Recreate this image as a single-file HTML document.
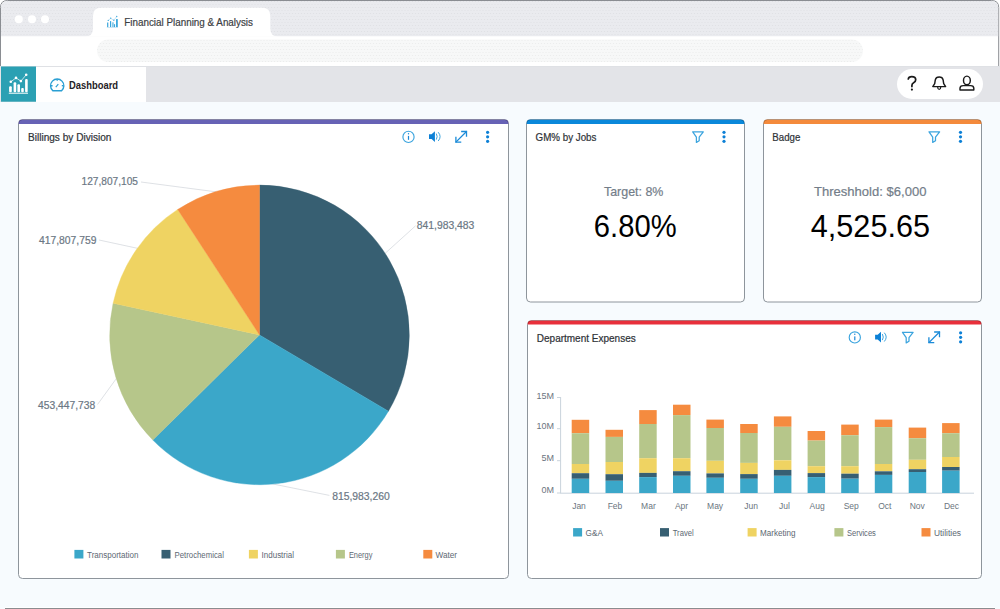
<!DOCTYPE html>
<html><head><meta charset="utf-8">
<style>
*{margin:0;padding:0}
html,body{width:1000px;height:609px;overflow:hidden;background:#f7fbfe}
svg{display:block;font-family:"Liberation Sans",sans-serif}
</style></head>
<body>
<svg width="1000" height="609" viewBox="0 0 1000 609">
<defs>
  <pattern id="dots" width="3" height="6" patternUnits="userSpaceOnUse">
    <rect width="3" height="6" fill="#eaebef"/>
    <circle cx="1.5" cy="1.5" r="0.55" fill="#dfe0e4"/>
    <circle cx="0" cy="4.5" r="0.55" fill="#dfe0e4"/>
    <circle cx="3" cy="4.5" r="0.55" fill="#dfe0e4"/>
  </pattern>
  <pattern id="dots2" width="3" height="6" patternUnits="userSpaceOnUse">
    <rect width="3" height="6" fill="#f7f8f8"/>
    <circle cx="1.5" cy="1.5" r="0.55" fill="#eaebec"/>
    <circle cx="0" cy="4.5" r="0.55" fill="#eaebec"/>
    <circle cx="3" cy="4.5" r="0.55" fill="#eaebec"/>
  </pattern>
</defs>
<!-- page bg -->
<rect x="0" y="0" width="1000" height="609" fill="#f7fbfe"/>
<!-- browser chrome -->
<rect x="0" y="0" width="1000" height="67" fill="#ffffff"/>
<path d="M0.5,67 L0.5,7.5 Q0.5,0.5 7.5,0.5 L991.5,0.5 Q998.7,0.5 998.7,7.5 L998.7,67" fill="#ffffff" stroke="#8a8d92" stroke-width="1"/>
<path d="M1,36.3 L1,7.5 Q1,1 7.5,1 L991.5,1 Q998.2,1 998.2,7.5 L998.2,36.3 Z" fill="url(#dots)"/>
<!-- tab with flares -->
<path d="M85,36.5 Q93,36.5 93,28.5 L93,16 Q93,7.8 101.2,7.8 L262.1,7.8 Q270.3,7.8 270.3,16 L270.3,28.5 Q270.3,36.5 278.3,36.5 Z" fill="#ffffff"/>
<circle cx="18.8" cy="19.2" r="4" fill="#fff"/>
<circle cx="32" cy="19.2" r="4" fill="#fff"/>
<circle cx="45" cy="19.2" r="4" fill="#fff"/>
<!-- tab icon -->
<g fill="#3aa7dc">
  <rect x="107.1" y="22.5" width="1.2" height="4.5"/>
  <rect x="110" y="21.1" width="1.2" height="5.9"/>
  <rect x="112.4" y="22.3" width="1.1" height="4.7"/>
  <rect x="114" y="24.2" width="1.1" height="2.8"/>
  <rect x="116" y="19.1" width="1.8" height="7.9"/>
  <rect x="106.8" y="27" width="11.2" height="0.6" fill="#a9d6ef"/>
  <circle cx="108.3" cy="20.4" r="0.7"/>
  <circle cx="110.7" cy="18.3" r="0.7"/>
  <circle cx="113.8" cy="20.3" r="0.7"/>
  <circle cx="116.7" cy="16.5" r="0.7"/>
  <polyline points="108.3,20.4 110.7,18.3 113.8,20.3 116.7,16.5" fill="none" stroke="#8ccbea" stroke-width="0.5"/>
</g>
<text x="124.3" y="26" font-size="11" fill="#3b3e43" stroke="#3b3e43" stroke-width="0.2" textLength="128.7" lengthAdjust="spacingAndGlyphs">Financial Planning &amp; Analysis</text>
<!-- address pill -->
<rect x="97" y="39.5" width="766" height="22.5" rx="11.25" fill="url(#dots2)"/>
<line x1="0" y1="66.5" x2="1000" y2="66.5" stroke="#dfe1e5" stroke-width="1"/>

<!-- app header -->
<rect x="0" y="67" width="1000" height="35" fill="#e3e4e8"/>
<rect x="1" y="66.5" width="35" height="35.2" fill="#2ba0b3"/>
<rect x="36" y="67" width="110" height="35" fill="#ffffff"/>
<!-- logo -->
<g fill="#ffffff">
  <rect x="9.1" y="86.3" width="2.7" height="5.9" rx="1"/>
  <rect x="13.6" y="82.3" width="2.6" height="9.9" rx="1"/>
  <rect x="17.4" y="84.3" width="2.6" height="7.9" rx="1"/>
  <rect x="21.2" y="88.1" width="2.6" height="4.1" rx="1"/>
  <rect x="25.1" y="79" width="2.6" height="13.2" rx="1"/>
  <rect x="8.8" y="92.7" width="19.2" height="1" />
  <circle cx="10.8" cy="81.8" r="1.3"/>
  <circle cx="16" cy="77.9" r="1.3"/>
  <circle cx="20.9" cy="81.1" r="1.3"/>
  <circle cx="26.2" cy="74.8" r="1.3"/>
  <polyline points="10.8,81.8 16,77.9 20.9,81.1 26.2,74.8" fill="none" stroke="#fff" stroke-width="0.7"/>
</g>
<!-- gauge icon -->
<g fill="none" stroke="#2a9fd3" stroke-width="1.4">
  <path d="M52.8,90.7 A6.65,6.65 0 1 1 61.6,90.7 Z"/>
  <line x1="57.2" y1="79.2" x2="57.2" y2="80.8"/>
  <line x1="51" y1="85.7" x2="52.6" y2="85.7"/>
  <line x1="61.8" y1="85.7" x2="63.4" y2="85.7"/>
  <line x1="55.8" y1="87.2" x2="58.3" y2="84.1" stroke-width="1.2"/>
</g>
<text x="69.1" y="88.9" font-size="10.5" font-weight="bold" fill="#1f2226" textLength="49" lengthAdjust="spacingAndGlyphs">Dashboard</text>
<!-- right pill -->
<rect x="897" y="69" width="86" height="30" rx="15" fill="#ffffff"/>
<g fill="none" stroke="#1a1a1a" stroke-width="1.45" stroke-linecap="round" stroke-linejoin="round">
  <path stroke-width="1.75" d="M908.3,79 Q908.6,76.6 911.8,76.6 Q915.7,76.6 915.7,79.7 Q915.7,81.6 913.6,82.7 Q911.9,83.6 911.9,85.4 L911.9,86.6"/>
  <path d="M932.8,86.6 L934.7,83.6 L935.3,79.8 Q935.9,76.9 939.2,76.9 Q942.5,76.9 943.1,79.8 L943.7,83.6 L945.6,86.6 Z"/>
  <path d="M937.7,87.2 Q937.7,89.3 939.2,89.3 Q940.7,89.3 940.7,87.2" stroke-width="1.2"/>
  <ellipse cx="966.9" cy="80.4" rx="3.4" ry="4.3"/>
  <path d="M960,90 L960,88.3 Q960,85.6 963.2,85.6 L970.6,85.6 Q973.8,85.6 973.8,88.3 L973.8,90 Z"/>
</g>
<circle cx="911.9" cy="89.6" r="1.1" fill="#1a1a1a"/>
<!-- cards -->
<g fill="#ffffff">
  <rect x="18.5" y="119.5" width="490" height="459" rx="4"/>
  <rect x="526.5" y="119.5" width="218" height="182.5" rx="4"/>
  <rect x="763.5" y="119.5" width="218" height="182.5" rx="4"/>
  <rect x="527.5" y="320.5" width="454" height="258" rx="4"/>
</g>
<path d="M18.5,124 L18.5,123.5 Q18.5,119.5 22.5,119.5 L504.5,119.5 Q508.5,119.5 508.5,123.5 L508.5,124 Z" fill="#6762b5"/>
<path d="M526.5,124 L526.5,123.5 Q526.5,119.5 530.5,119.5 L740.5,119.5 Q744.5,119.5 744.5,123.5 L744.5,124 Z" fill="#0a88da"/>
<path d="M763.5,124 L763.5,123.5 Q763.5,119.5 767.5,119.5 L977.5,119.5 Q981.5,119.5 981.5,123.5 L981.5,124 Z" fill="#f48a3c"/>
<path d="M527.5,324.5 L527.5,324.5 Q527.5,320.5 531.5,320.5 L977.5,320.5 Q981.5,320.5 981.5,324.5 L981.5,324.5 Z" fill="#e8303b"/>
<g stroke="#8e959c" stroke-width="1" fill="none">
  <path d="M18.5,124 L18.5,574.5 Q18.5,578.5 22.5,578.5 L504.5,578.5 Q508.5,578.5 508.5,574.5 L508.5,124"/>
  <path d="M526.5,124 L526.5,298 Q526.5,302 530.5,302 L740.5,302 Q744.5,302 744.5,298 L744.5,124"/>
  <path d="M763.5,124 L763.5,298 Q763.5,302 767.5,302 L977.5,302 Q981.5,302 981.5,298 L981.5,124"/>
  <path d="M527.5,324.5 L527.5,574.5 Q527.5,578.5 531.5,578.5 L977.5,578.5 Q981.5,578.5 981.5,574.5 L981.5,324.5"/>
</g>
<g stroke="#000" stroke-opacity="0.25" stroke-width="1" fill="none">
  <path d="M18.5,124 L18.5,123.5 Q18.5,119.5 22.5,119.5 L504.5,119.5 Q508.5,119.5 508.5,123.5 L508.5,124"/>
  <path d="M526.5,124 L526.5,123.5 Q526.5,119.5 530.5,119.5 L740.5,119.5 Q744.5,119.5 744.5,123.5 L744.5,124"/>
  <path d="M763.5,124 L763.5,123.5 Q763.5,119.5 767.5,119.5 L977.5,119.5 Q981.5,119.5 981.5,123.5 L981.5,124"/>
  <path d="M527.5,324.5 L527.5,324.5 Q527.5,320.5 531.5,320.5 L977.5,320.5 Q981.5,320.5 981.5,324.5"/>
</g>
<rect x="5" y="607" width="990" height="1" fill="#ffffff"/>
<rect x="5" y="608" width="990" height="1" fill="#8a8c90"/>

<!-- titles -->
<g font-size="10.5" fill="#2f3338" stroke="#2f3338" stroke-width="0.22">
  <text x="28" y="141" textLength="83.4" lengthAdjust="spacingAndGlyphs">Billings by Division</text>
  <text x="535.6" y="141.2" textLength="60.8" lengthAdjust="spacingAndGlyphs">GM% by Jobs</text>
  <text x="772.3" y="141.2" textLength="28" lengthAdjust="spacingAndGlyphs">Badge</text>
  <text x="536.8" y="341.7" textLength="98.9" lengthAdjust="spacingAndGlyphs">Department Expenses</text>
</g>

<!-- KPI -->
<text x="604" y="196" font-size="13" fill="#737d89" stroke="#737d89" stroke-width="0.2" textLength="59.4" lengthAdjust="spacingAndGlyphs">Target: 8%</text>
<text x="593.8" y="236.5" font-size="32" fill="#000000" textLength="82.8" lengthAdjust="spacingAndGlyphs">6.80%</text>
<text x="814" y="196" font-size="13" fill="#737d89" stroke="#737d89" stroke-width="0.2" textLength="112.4" lengthAdjust="spacingAndGlyphs">Threshhold: $6,000</text>
<text x="810.8" y="236.5" font-size="32" fill="#000000" textLength="119.2" lengthAdjust="spacingAndGlyphs">4,525.65</text>

<!-- pie leader lines -->
<g stroke="#d5d9de" stroke-width="0.8" fill="none">
  <line x1="141" y1="182" x2="225" y2="193"/>
  <line x1="99" y1="240" x2="150" y2="251"/>
  <line x1="97.5" y1="404.5" x2="125" y2="366.6"/>
  <line x1="415.6" y1="225.8" x2="380" y2="258"/>
  <line x1="329.4" y1="495.4" x2="262" y2="481.8"/>
</g>
<!-- pie -->
<path d="M259.5,334.9 L259.50,185.10 A149.8,149.8 0 0 1 388.44,411.15 Z" fill="#375f72" stroke="#375f72" stroke-width="0.4" stroke-linejoin="round"/>
<path d="M259.5,334.9 L388.44,411.15 A149.8,149.8 0 0 1 152.84,440.08 Z" fill="#3ba7c9" stroke="#3ba7c9" stroke-width="0.4" stroke-linejoin="round"/>
<path d="M259.5,334.9 L152.84,440.08 A149.8,149.8 0 0 1 113.08,303.24 Z" fill="#b6c68a" stroke="#b6c68a" stroke-width="0.4" stroke-linejoin="round"/>
<path d="M259.5,334.9 L113.08,303.24 A149.8,149.8 0 0 1 177.69,209.41 Z" fill="#efd362" stroke="#efd362" stroke-width="0.4" stroke-linejoin="round"/>
<path d="M259.5,334.9 L177.69,209.41 A149.8,149.8 0 0 1 259.50,185.10 Z" fill="#f58b3f" stroke="#f58b3f" stroke-width="0.4" stroke-linejoin="round"/>
<!-- pie labels -->
<g font-size="10.4" fill="#6b7784" stroke="#6b7784" stroke-width="0.2">
  <text x="81.6" y="185.4" textLength="56.4" lengthAdjust="spacingAndGlyphs">127,807,105</text>
  <text x="39" y="244" textLength="57.4" lengthAdjust="spacingAndGlyphs">417,807,759</text>
  <text x="38" y="408.5" textLength="57.2" lengthAdjust="spacingAndGlyphs">453,447,738</text>
  <text x="416.8" y="228.6" textLength="57.6" lengthAdjust="spacingAndGlyphs">841,983,483</text>
  <text x="332.2" y="499.6" textLength="57.6" lengthAdjust="spacingAndGlyphs">815,983,260</text>
</g>
<!-- pie legend -->
<g>
  <rect x="74.4" y="549.9" width="9" height="8.6" fill="#3ba7c9"/>
  <rect x="161.5" y="549.9" width="9" height="8.6" fill="#375f72"/>
  <rect x="248.9" y="549.9" width="9" height="8.6" fill="#efd362"/>
  <rect x="335.9" y="549.9" width="9" height="8.6" fill="#b6c68a"/>
  <rect x="423.3" y="549.9" width="9" height="8.6" fill="#f58b3f"/>
</g>
<g font-size="8.5" fill="#5d6873">
  <text x="87.1" y="557.8" textLength="51.4" lengthAdjust="spacingAndGlyphs">Transportation</text>
  <text x="174.5" y="557.8" textLength="49.4" lengthAdjust="spacingAndGlyphs">Petrochemical</text>
  <text x="261.6" y="557.8" textLength="32.4" lengthAdjust="spacingAndGlyphs">Industrial</text>
  <text x="348.9" y="557.8" textLength="23.5" lengthAdjust="spacingAndGlyphs">Energy</text>
  <text x="435.5" y="557.8" textLength="21.6" lengthAdjust="spacingAndGlyphs">Water</text>
</g>

<!-- bar chart axes -->
<g stroke="#c9d3dc" stroke-width="1" fill="none">
  <line x1="560.6" y1="397" x2="560.6" y2="493.5"/>
  <line x1="560.6" y1="493.2" x2="974" y2="493.2"/>
  <line x1="557" y1="397.5" x2="560.6" y2="397.5"/>
  <line x1="557" y1="428.7" x2="560.6" y2="428.7"/>
  <line x1="557" y1="460.7" x2="560.6" y2="460.7"/>
  <line x1="557" y1="493" x2="560.6" y2="493"/>
</g>
<g font-size="9" fill="#6b7580" text-anchor="end">
  <text x="554" y="398.7">15M</text>
  <text x="554" y="429.4">10M</text>
  <text x="554" y="461.2">5M</text>
  <text x="554" y="493.1">0M</text>
</g>
<rect x="571.7" y="419.8" width="17.5" height="13.4" fill="#f58b3f"/>
<rect x="571.7" y="433.2" width="17.5" height="30.8" fill="#b6c68a"/>
<rect x="571.7" y="464.0" width="17.5" height="9.2" fill="#efd362"/>
<rect x="571.7" y="473.2" width="17.5" height="5.6" fill="#375f72"/>
<rect x="571.7" y="478.8" width="17.5" height="14.2" fill="#3ba7c9"/>
<rect x="605.5" y="429.8" width="17.5" height="7.1" fill="#f58b3f"/>
<rect x="605.5" y="436.9" width="17.5" height="25.1" fill="#b6c68a"/>
<rect x="605.5" y="462.0" width="17.5" height="12.2" fill="#efd362"/>
<rect x="605.5" y="474.2" width="17.5" height="6.6" fill="#375f72"/>
<rect x="605.5" y="480.8" width="17.5" height="12.2" fill="#3ba7c9"/>
<rect x="639.2" y="410.1" width="17.5" height="13.9" fill="#f58b3f"/>
<rect x="639.2" y="424.0" width="17.5" height="34.2" fill="#b6c68a"/>
<rect x="639.2" y="458.2" width="17.5" height="14.7" fill="#efd362"/>
<rect x="639.2" y="472.9" width="17.5" height="4.2" fill="#375f72"/>
<rect x="639.2" y="477.1" width="17.5" height="15.9" fill="#3ba7c9"/>
<rect x="673.0" y="404.7" width="17.5" height="10.4" fill="#f58b3f"/>
<rect x="673.0" y="415.1" width="17.5" height="43.1" fill="#b6c68a"/>
<rect x="673.0" y="458.2" width="17.5" height="13.0" fill="#efd362"/>
<rect x="673.0" y="471.2" width="17.5" height="4.6" fill="#375f72"/>
<rect x="673.0" y="475.8" width="17.5" height="17.2" fill="#3ba7c9"/>
<rect x="706.4" y="419.6" width="17.5" height="8.4" fill="#f58b3f"/>
<rect x="706.4" y="428.0" width="17.5" height="32.8" fill="#b6c68a"/>
<rect x="706.4" y="460.8" width="17.5" height="12.6" fill="#efd362"/>
<rect x="706.4" y="473.4" width="17.5" height="4.4" fill="#375f72"/>
<rect x="706.4" y="477.8" width="17.5" height="15.2" fill="#3ba7c9"/>
<rect x="740.2" y="424.0" width="17.5" height="9.0" fill="#f58b3f"/>
<rect x="740.2" y="433.0" width="17.5" height="29.9" fill="#b6c68a"/>
<rect x="740.2" y="462.9" width="17.5" height="11.2" fill="#efd362"/>
<rect x="740.2" y="474.1" width="17.5" height="4.7" fill="#375f72"/>
<rect x="740.2" y="478.8" width="17.5" height="14.2" fill="#3ba7c9"/>
<rect x="773.9" y="416.4" width="17.5" height="10.4" fill="#f58b3f"/>
<rect x="773.9" y="426.8" width="17.5" height="33.5" fill="#b6c68a"/>
<rect x="773.9" y="460.3" width="17.5" height="9.6" fill="#efd362"/>
<rect x="773.9" y="469.9" width="17.5" height="5.9" fill="#375f72"/>
<rect x="773.9" y="475.8" width="17.5" height="17.2" fill="#3ba7c9"/>
<rect x="807.6" y="431.0" width="17.5" height="9.6" fill="#f58b3f"/>
<rect x="807.6" y="440.6" width="17.5" height="25.6" fill="#b6c68a"/>
<rect x="807.6" y="466.2" width="17.5" height="6.9" fill="#efd362"/>
<rect x="807.6" y="473.1" width="17.5" height="4.0" fill="#375f72"/>
<rect x="807.6" y="477.1" width="17.5" height="15.9" fill="#3ba7c9"/>
<rect x="841.2" y="424.6" width="17.5" height="10.6" fill="#f58b3f"/>
<rect x="841.2" y="435.2" width="17.5" height="31.0" fill="#b6c68a"/>
<rect x="841.2" y="466.2" width="17.5" height="7.5" fill="#efd362"/>
<rect x="841.2" y="473.7" width="17.5" height="5.0" fill="#375f72"/>
<rect x="841.2" y="478.7" width="17.5" height="14.3" fill="#3ba7c9"/>
<rect x="874.8" y="419.6" width="17.5" height="7.5" fill="#f58b3f"/>
<rect x="874.8" y="427.1" width="17.5" height="36.9" fill="#b6c68a"/>
<rect x="874.8" y="464.0" width="17.5" height="7.3" fill="#efd362"/>
<rect x="874.8" y="471.3" width="17.5" height="3.6" fill="#375f72"/>
<rect x="874.8" y="474.9" width="17.5" height="18.1" fill="#3ba7c9"/>
<rect x="908.7" y="427.6" width="17.5" height="10.6" fill="#f58b3f"/>
<rect x="908.7" y="438.2" width="17.5" height="21.6" fill="#b6c68a"/>
<rect x="908.7" y="459.8" width="17.5" height="9.4" fill="#efd362"/>
<rect x="908.7" y="469.2" width="17.5" height="2.8" fill="#375f72"/>
<rect x="908.7" y="472.0" width="17.5" height="21.0" fill="#3ba7c9"/>
<rect x="942.1" y="423.1" width="17.5" height="10.1" fill="#f58b3f"/>
<rect x="942.1" y="433.2" width="17.5" height="23.8" fill="#b6c68a"/>
<rect x="942.1" y="457.0" width="17.5" height="10.0" fill="#efd362"/>
<rect x="942.1" y="467.0" width="17.5" height="3.7" fill="#375f72"/>
<rect x="942.1" y="470.7" width="17.5" height="22.3" fill="#3ba7c9"/>
<g font-size="8.5" fill="#6b7580">
<text x="579.0" y="509.4" text-anchor="middle">Jan</text>
<text x="615.0" y="509.4" text-anchor="middle">Feb</text>
<text x="648.4" y="509.4" text-anchor="middle">Mar</text>
<text x="681.5" y="509.4" text-anchor="middle">Apr</text>
<text x="715.1" y="509.4" text-anchor="middle">May</text>
<text x="751.1" y="509.4" text-anchor="middle">Jun</text>
<text x="784.5" y="509.4" text-anchor="middle">Jul</text>
<text x="817.1" y="509.4" text-anchor="middle">Aug</text>
<text x="851.2" y="509.4" text-anchor="middle">Sep</text>
<text x="884.8" y="509.4" text-anchor="middle">Oct</text>
<text x="917.2" y="509.4" text-anchor="middle">Nov</text>
<text x="951.5" y="509.4" text-anchor="middle">Dec</text>
</g>
<!-- bar legend -->
<g>
  <rect x="573.1" y="528.1" width="9" height="8.4" fill="#3ba7c9"/>
  <rect x="660" y="528.1" width="9" height="8.4" fill="#375f72"/>
  <rect x="747.6" y="528.1" width="9" height="8.4" fill="#efd362"/>
  <rect x="834.4" y="528.1" width="9" height="8.4" fill="#b6c68a"/>
  <rect x="921.5" y="528.1" width="9" height="8.4" fill="#f58b3f"/>
</g>
<g font-size="8.5" fill="#5d6873">
  <text x="585.6" y="535.8" textLength="17.3" lengthAdjust="spacingAndGlyphs">G&amp;A</text>
  <text x="672.7" y="535.8" textLength="21" lengthAdjust="spacingAndGlyphs">Travel</text>
  <text x="760" y="535.8" textLength="35.5" lengthAdjust="spacingAndGlyphs">Marketing</text>
  <text x="846.9" y="535.8" textLength="29" lengthAdjust="spacingAndGlyphs">Services</text>
  <text x="934" y="535.8" textLength="27" lengthAdjust="spacingAndGlyphs">Utilities</text>
</g>

<!-- card icons -->
<g><circle cx="408.5" cy="136.9" r="5.6" fill="none" stroke="#3ba4de" stroke-width="1.15"/>
<rect x="407.9" y="135.9" width="1.2" height="3.9" fill="#1a86d6"/><circle cx="408.5" cy="133.8" r="0.7" fill="#1a86d6"/></g>
<g><path d="M429,134.2 H431.6 L434.9,131.2 V142.0 L431.6,139.0 H429 Z" fill="#0c80d6"/>
<path d="M436.3,133.6 Q438,136.6 436.3,139.6" fill="none" stroke="#3ba4de" stroke-width="1"/>
<path d="M438.2,132.2 Q442,136.6 438.2,141.0" fill="none" stroke="#3ba4de" stroke-width="1"/></g>
<g fill="none" stroke="#1a8ad8" stroke-width="1.3" stroke-linecap="square">
<line x1="456.09999999999997" y1="141.9" x2="466.3" y2="131.70000000000002"/>
<polyline points="461.8,131.5 466.5,131.5 466.5,136.20000000000002"/>
<polyline points="455.9,137.4 455.9,142.10000000000002 460.59999999999997,142.10000000000002"/></g>
<g fill="#0c80d6"><circle cx="487.6" cy="132.3" r="1.6"/><circle cx="487.6" cy="136.8" r="1.6"/><circle cx="487.6" cy="141.3" r="1.6"/></g>
<path d="M692.7,131.8 H703.3 L699.2,137.2 V140.8 L696.4,142.4 V137.2 Z" fill="none" stroke="#3ba4de" stroke-width="1.25" stroke-linejoin="round"/>
<g fill="#0c80d6"><circle cx="724" cy="132.3" r="1.6"/><circle cx="724" cy="136.8" r="1.6"/><circle cx="724" cy="141.3" r="1.6"/></g>
<path d="M929.0,131.8 H939.5999999999999 L935.5,137.2 V140.8 L932.6999999999999,142.4 V137.2 Z" fill="none" stroke="#3ba4de" stroke-width="1.25" stroke-linejoin="round"/>
<g fill="#0c80d6"><circle cx="960.5" cy="132.3" r="1.6"/><circle cx="960.5" cy="136.8" r="1.6"/><circle cx="960.5" cy="141.3" r="1.6"/></g>
<g><circle cx="854.8" cy="337.4" r="5.6" fill="none" stroke="#3ba4de" stroke-width="1.15"/>
<rect x="854.1999999999999" y="336.4" width="1.2" height="3.9" fill="#1a86d6"/><circle cx="854.8" cy="334.29999999999995" r="0.7" fill="#1a86d6"/></g>
<g><path d="M875.1,334.70000000000005 H877.7 L881.0,331.70000000000005 V342.5 L877.7,339.5 H875.1 Z" fill="#0c80d6"/>
<path d="M882.4,334.1 Q884.1,337.1 882.4,340.1" fill="none" stroke="#3ba4de" stroke-width="1"/>
<path d="M884.3000000000001,332.70000000000005 Q888.1,337.1 884.3000000000001,341.5" fill="none" stroke="#3ba4de" stroke-width="1"/></g>
<path d="M902.5,332.3 H913.0999999999999 L909.0,337.7 V341.3 L906.1999999999999,342.9 V337.7 Z" fill="none" stroke="#3ba4de" stroke-width="1.25" stroke-linejoin="round"/>
<g fill="none" stroke="#1a8ad8" stroke-width="1.3" stroke-linecap="square">
<line x1="929.1" y1="342.40000000000003" x2="939.3000000000001" y2="332.2"/>
<polyline points="934.8000000000001,332.0 939.5,332.0 939.5,336.7"/>
<polyline points="928.9000000000001,337.90000000000003 928.9000000000001,342.6 933.6,342.6"/></g>
<g fill="#0c80d6"><circle cx="960.6" cy="332.8" r="1.6"/><circle cx="960.6" cy="337.3" r="1.6"/><circle cx="960.6" cy="341.8" r="1.6"/></g>
</svg>
</body></html>
